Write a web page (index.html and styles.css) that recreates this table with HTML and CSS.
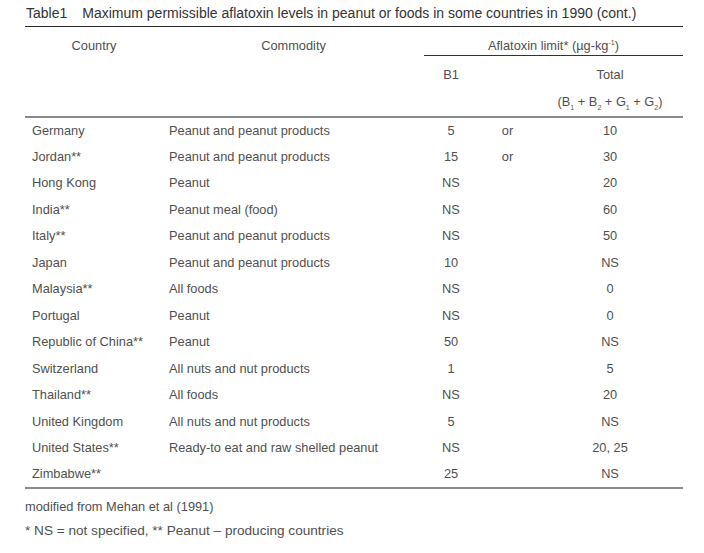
FILE: index.html
```html
<!DOCTYPE html>
<html lang="en">
<head>
<meta charset="utf-8">
<title>Table1</title>
<link rel="stylesheet" href="styles.css">
</head>
<body>
<div class="page">
  <div class="caption"><span class="cap-label">Table1</span><span>Maximum permissible aflatoxin levels in peanut or foods in some countries in 1990 (cont.)</span></div>
  <table class="data">
    <colgroup>
      <col class="c-country"><col class="c-commodity"><col class="c-b1"><col class="c-or"><col class="c-total">
    </colgroup>
    <thead>
      <tr class="h1">
        <th rowspan="3" class="hl">Country</th>
        <th rowspan="3" class="hl">Commodity</th>
        <th colspan="3" class="limit">Aflatoxin limit* (µg-kg<sup>-1</sup>)</th>
      </tr>
      <tr class="h2">
        <th>B1</th><th></th><th>Total</th>
      </tr>
      <tr class="h3">
        <th></th><th></th>
        <th class="formula">(B<sub>1</sub> + B<sub>2</sub> + G<sub>1</sub> + G<sub>2</sub>)</th>
      </tr>
    </thead>
    <tbody>
      <tr><td>Germany</td><td>Peanut and peanut products</td><td class="n">5</td><td class="n">or</td><td class="n">10</td></tr>
      <tr><td>Jordan**</td><td>Peanut and peanut products</td><td class="n">15</td><td class="n">or</td><td class="n">30</td></tr>
      <tr><td>Hong Kong</td><td>Peanut</td><td class="n">NS</td><td></td><td class="n">20</td></tr>
      <tr><td>India**</td><td>Peanut meal (food)</td><td class="n">NS</td><td></td><td class="n">60</td></tr>
      <tr><td>Italy**</td><td>Peanut and peanut products</td><td class="n">NS</td><td></td><td class="n">50</td></tr>
      <tr><td>Japan</td><td>Peanut and peanut products</td><td class="n">10</td><td></td><td class="n">NS</td></tr>
      <tr><td>Malaysia**</td><td>All foods</td><td class="n">NS</td><td></td><td class="n">0</td></tr>
      <tr><td>Portugal</td><td>Peanut</td><td class="n">NS</td><td></td><td class="n">0</td></tr>
      <tr><td>Republic of China**</td><td>Peanut</td><td class="n">50</td><td></td><td class="n">NS</td></tr>
      <tr><td>Switzerland</td><td>All nuts and nut products</td><td class="n">1</td><td></td><td class="n">5</td></tr>
      <tr><td>Thailand**</td><td>All foods</td><td class="n">NS</td><td></td><td class="n">20</td></tr>
      <tr><td>United Kingdom</td><td>All nuts and nut products</td><td class="n">5</td><td></td><td class="n">NS</td></tr>
      <tr><td>United States**</td><td>Ready-to eat and raw shelled peanut</td><td class="n">NS</td><td></td><td class="n">20, 25</td></tr>
      <tr><td>Zimbabwe**</td><td></td><td class="n">25</td><td></td><td class="n">NS</td></tr>
    </tbody>
  </table>
  <p class="note">modified from Mehan et al (1991)</p>
  <p class="note note-key">* NS = not specified, ** Peanut – producing countries</p>
</div>
</body>
</html>
```

FILE: styles.css
```css
html, body {
  margin: 0;
  padding: 0;
  background: #ffffff;
}

body {
  font-family: "Liberation Sans", Arial, sans-serif;
  color: #505050;
}

.page {
  width: 658px;
  padding: 0 0 0 25px;
}

.caption {
  height: 27px;
  border-bottom: 1px solid #2a2a2a;
  font-size: 14px;
  line-height: 16px;
  padding-top: 5px;
  box-sizing: border-box;
  color: #333333;
  display: flex;
  gap: 15px;
  padding-left: 1px;
}

.data {
  width: 658px;
  border-collapse: collapse;
  table-layout: fixed;
  font-size: 12.8px;
}

.c-country { width: 138px; }
.c-commodity { width: 261px; }
.c-b1 { width: 54px; }
.c-or { width: 59px; }
.c-total { width: 146px; }

th {
  font-weight: normal;
  padding: 0;
  line-height: 16px;
  text-align: center;
}

.h1 th {
  height: 27px;
  vertical-align: top;
}

.h1 th.limit {
  border-bottom: 1px solid #333333;
  vertical-align: bottom;
  padding-bottom: 1px;
}

.h1 th.hl {
  padding-top: 11px;
  border-bottom: 2px solid #8a8a8a;
}

.h2 th {
  height: 37px;
  vertical-align: middle;
}

.h3 th {
  height: 22px;
  vertical-align: top;
  padding-top: 1px;
  border-bottom: 2px solid #8a8a8a;
}

sub {
  font-size: 7px;
  vertical-align: -4px;
  line-height: 0;
}

sup {
  font-size: 7px;
  vertical-align: 5px;
  line-height: 0;
}

tbody tr {
  height: 26.5px;
}

td {
  padding: 0 0 0 7px;
  line-height: 16px;
  vertical-align: middle;
  white-space: nowrap;
}

td:nth-child(2) {
  padding-left: 6px;
}

td.n {
  padding: 0;
  text-align: center;
}

tbody tr:last-child td {
  border-bottom: 2px solid #8a8a8a;
}

.note {
  margin: 0;
  font-size: 12.8px;
  line-height: 16px;
  height: 24px;
  display: flex;
  align-items: center;
}

.note:first-of-type {
  margin-top: 6px;
}

.note-key {
  font-size: 13.6px;
}
```
